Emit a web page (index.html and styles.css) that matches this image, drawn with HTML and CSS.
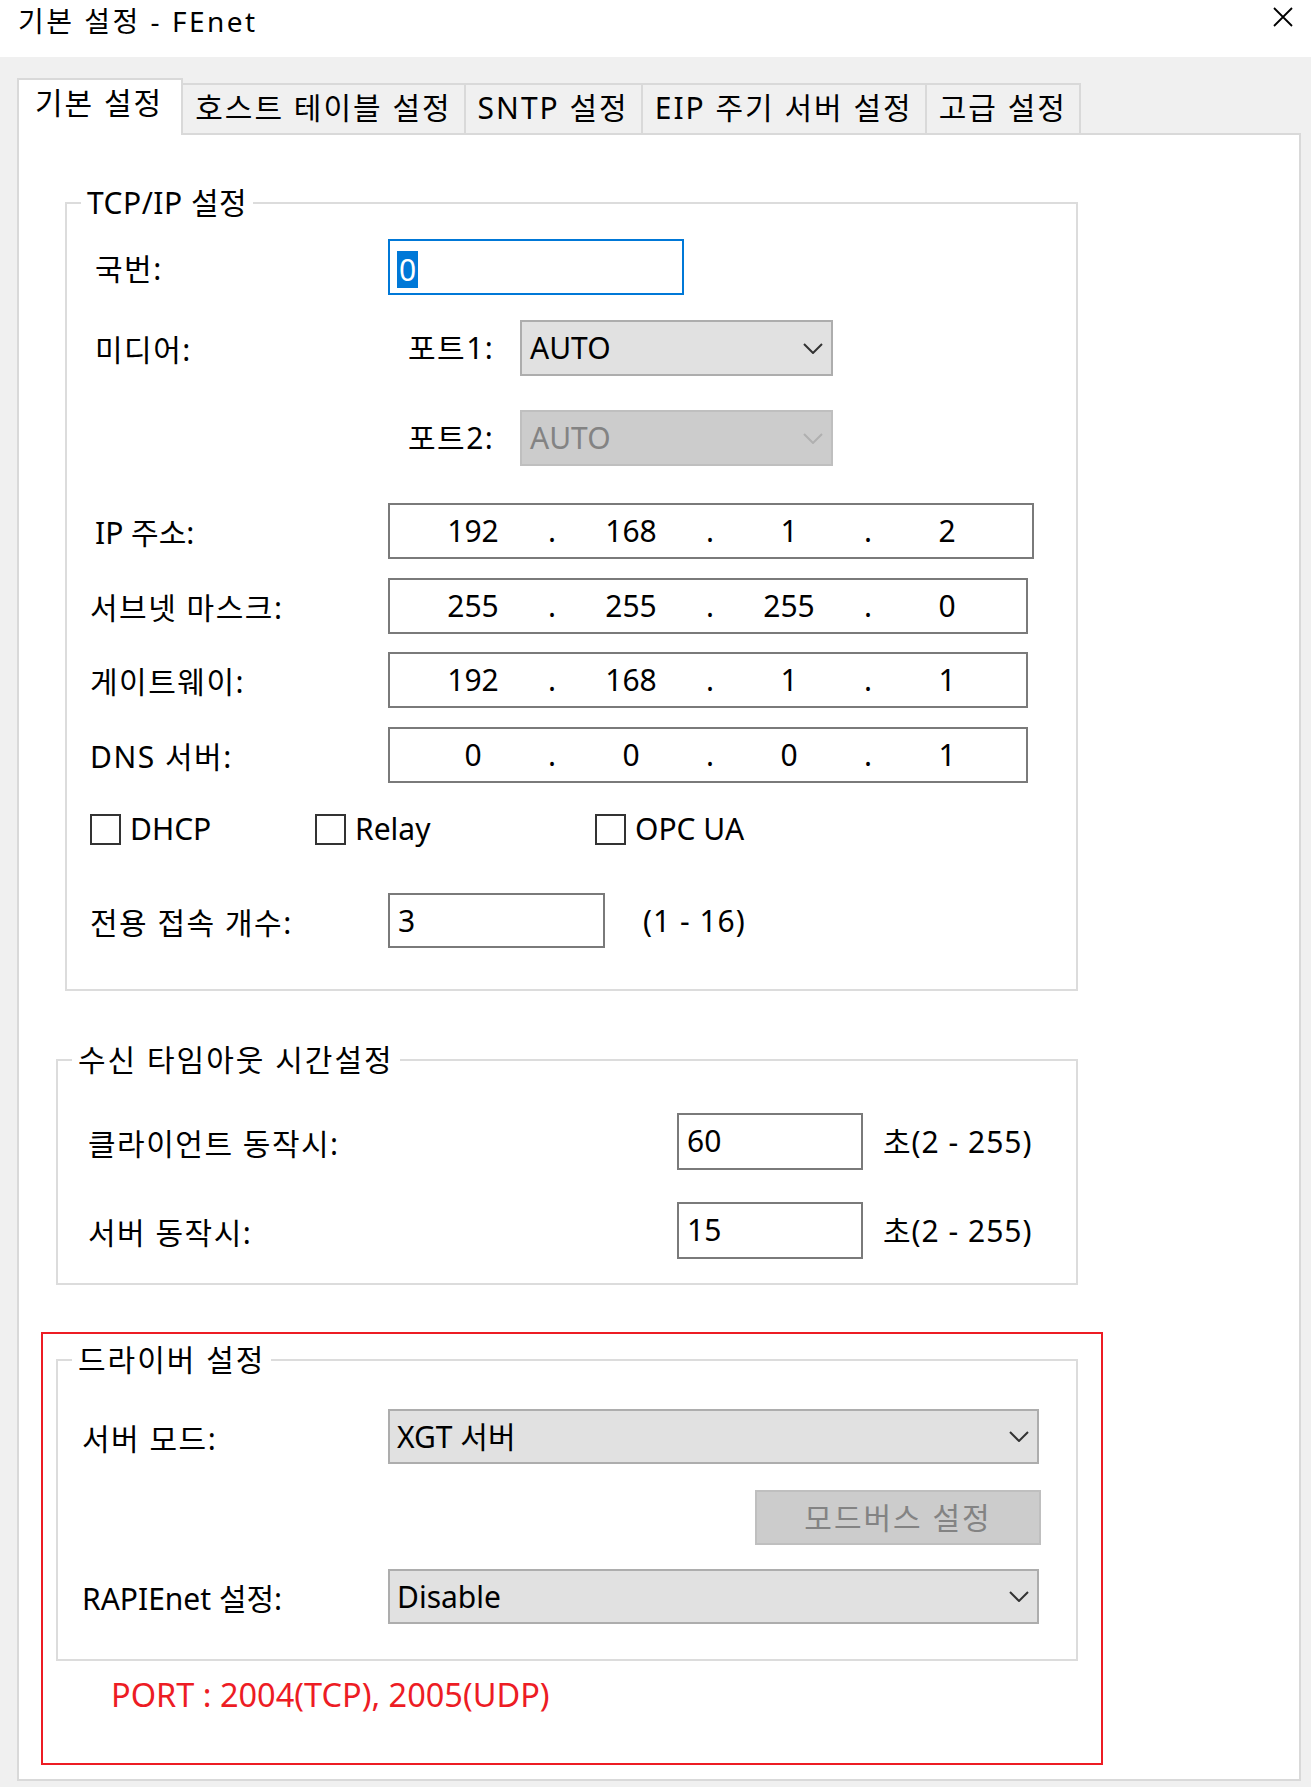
FILE: index.html
```html
<!DOCTYPE html>
<html lang="ko">
<head>
    <meta charset="UTF-8">
    <meta name="viewport" content="width=device-width, initial-scale=1.0">
    <title>기본 설정 - FEnet</title>
    <link rel="stylesheet" href="styles.css">
</head>
<body>
    <div class="titlebar">
        <span class="title">기본 설정 - FEnet</span>
        <svg class="close-icon" width="20" height="20" viewBox="0 0 20 20">
            <path d="M1 1 L19 19 M19 1 L1 19" stroke="#000" stroke-width="1.8" fill="none"/>
        </svg>
    </div>

    <div class="tabs">
        <div class="tab active">기본 설정</div>
        <div class="tab">호스트 테이블 설정</div>
        <div class="tab">SNTP 설정</div>
        <div class="tab">EIP 주기 서버 설정</div>
        <div class="tab">고급 설정</div>
    </div>

    <div class="panel">
        <!-- TCP/IP -->
        <div class="group group-tcp">
            <div class="group-title">TCP/IP 설정</div>
            <div class="group-body">
                <div class="row row-station">
                    <div class="label shift">국번:</div>
                    <div class="input focus station-input"><span class="selected">0</span></div>
                </div>
                <div class="row row-port1">
                    <div class="label shift">미디어:</div>
                    <div class="sublabel">포트1:</div>
                    <div class="select port-select">
                        <span>AUTO</span>
                        <svg width="20" height="11" viewBox="0 0 20 11"><polyline points="1,1 10,10 19,1" fill="none" stroke="#333" stroke-width="2"/></svg>
                    </div>
                </div>
                <div class="row row-port2">
                    <div class="label"></div>
                    <div class="sublabel">포트2:</div>
                    <div class="select disabled port-select">
                        <span>AUTO</span>
                        <svg width="20" height="11" viewBox="0 0 20 11"><polyline points="1,1 10,10 19,1" fill="none" stroke="#b0b0b0" stroke-width="2"/></svg>
                    </div>
                </div>
                <div class="row row-ip">
                    <div class="label shift tight">IP 주소:</div>
                    <div class="ip wide">
                        <span class="ip-seg">192</span><span class="ip-dot">.</span>
                        <span class="ip-seg">168</span><span class="ip-dot">.</span>
                        <span class="ip-seg">1</span><span class="ip-dot">.</span>
                        <span class="ip-seg">2</span>
                    </div>
                </div>
                <div class="row row-mask">
                    <div class="label">서브넷 마스크:</div>
                    <div class="ip">
                        <span class="ip-seg">255</span><span class="ip-dot">.</span>
                        <span class="ip-seg">255</span><span class="ip-dot">.</span>
                        <span class="ip-seg">255</span><span class="ip-dot">.</span>
                        <span class="ip-seg">0</span>
                    </div>
                </div>
                <div class="row row-gateway">
                    <div class="label">게이트웨이:</div>
                    <div class="ip">
                        <span class="ip-seg">192</span><span class="ip-dot">.</span>
                        <span class="ip-seg">168</span><span class="ip-dot">.</span>
                        <span class="ip-seg">1</span><span class="ip-dot">.</span>
                        <span class="ip-seg">1</span>
                    </div>
                </div>
                <div class="row row-dns">
                    <div class="label">DNS 서버:</div>
                    <div class="ip">
                        <span class="ip-seg">0</span><span class="ip-dot">.</span>
                        <span class="ip-seg">0</span><span class="ip-dot">.</span>
                        <span class="ip-seg">0</span><span class="ip-dot">.</span>
                        <span class="ip-seg">1</span>
                    </div>
                </div>
                <div class="checks">
                    <div class="check"><span class="box"></span>DHCP</div>
                    <div class="check"><span class="box"></span>Relay</div>
                    <div class="check"><span class="box"></span>OPC UA</div>
                </div>
                <div class="row row-sessions">
                    <div class="label">전용 접속 개수:</div>
                    <div class="input sessions-input">3</div>
                    <div class="hint range">(1 - 16)</div>
                </div>
            </div>
        </div>

        <!-- receive timeout -->
        <div class="group group-timeout">
            <div class="group-title">수신 타임아웃 시간설정</div>
            <div class="group-body">
                <div class="row row-client">
                    <div class="label">클라이언트 동작시:</div>
                    <div class="input timeout-input">60</div>
                    <div class="hint">초(2 - 255)</div>
                </div>
                <div class="row row-server">
                    <div class="label">서버 동작시:</div>
                    <div class="input timeout-input">15</div>
                    <div class="hint">초(2 - 255)</div>
                </div>
            </div>
        </div>

        <!-- driver (marked) -->
        <div class="notice">
            <div class="group group-driver">
                <div class="group-title">드라이버 설정</div>
                <div class="group-body">
                    <div class="row row-mode">
                        <div class="label">서버 모드:</div>
                        <div class="select driver-select">
                            <span>XGT 서버</span>
                            <svg width="20" height="11" viewBox="0 0 20 11"><polyline points="1,1 10,10 19,1" fill="none" stroke="#333" stroke-width="2"/></svg>
                        </div>
                    </div>
                    <div class="row row-modbus">
                        <div class="button disabled">모드버스 설정</div>
                    </div>
                    <div class="row row-rapi">
                        <div class="label tight">RAPIEnet 설정:</div>
                        <div class="select driver-select">
                            <span>Disable</span>
                            <svg width="20" height="11" viewBox="0 0 20 11"><polyline points="1,1 10,10 19,1" fill="none" stroke="#333" stroke-width="2"/></svg>
                        </div>
                    </div>
                </div>
            </div>
            <p class="port-note">PORT : 2004(TCP), 2005(UDP)</p>
        </div>
    </div>
</body>
</html>
```

FILE: styles.css
```css
* {
    margin: 0;
    padding: 0;
    box-sizing: border-box;
}

body {
    font-family: "Noto Sans", "Noto Sans CJK KR", sans-serif;
    font-size: 30px;
    color: #000;
    background-color: #f0f0f0;
    width: 1311px;
}

/* title bar */
.titlebar {
    height: 57px;
    background: #fff;
    display: flex;
    justify-content: space-between;
    padding: 0 18px;
}

.title {
    font-size: 28px;
    line-height: 40px;
    margin-top: 1px;
    letter-spacing: 2.5px;
}

.close-icon {
    margin-top: 7px;
}

/* tabs */
.tabs {
    display: flex;
    align-items: flex-end;
    height: 55px;
    margin: 21px 0 0 17px;
}

.tab {
    height: 50px;
    padding: 5px 12px 0;
    line-height: 36px;
    letter-spacing: 2px;
    white-space: nowrap;
    background: #f0f0f0;
    border: 2px solid #d9d9d9;
    border-left: none;
    border-bottom: none;
}

.tab.active {
    position: relative;
    z-index: 1;
    height: 57px;
    margin-bottom: -2px;
    padding: 5px 18px 0 16px;
    background: #fff;
    border-left: 2px solid #d9d9d9;
}

.panel {
    width: 1284px;
    margin-left: 17px;
    padding-bottom: 14px;
    background: #fff;
    border: 2px solid #d9d9d9;
}

/* group boxes */
.group {
    border: 2px solid #dcdcdc;
}

.group-title {
    display: table;
    margin: -19px 0 0 14px;
    padding: 0 6px;
    line-height: 36px;
    letter-spacing: 2px;
    background: #fff;
}

.group-tcp {
    width: 1013px;
    margin: 67px 0 0 46px;
    padding-bottom: 41px;
}

.group-tcp .group-title {
    letter-spacing: 0.5px;
}

.group-tcp .group-body {
    padding-left: 23px;
}

.group-timeout {
    width: 1022px;
    margin: 68px 0 0 37px;
    padding-bottom: 24px;
}

.group-timeout .group-body {
    padding-left: 30px;
}

.group-driver {
    width: 1022px;
    margin: 25px 0 0 13px;
    padding-bottom: 35px;
}

.group-driver .group-body {
    padding-left: 24px;
}

/* rows */
.row {
    display: flex;
    align-items: center;
    line-height: 36px;
}

.label {
    flex: none;
    white-space: nowrap;
    padding-top: 4px;
    letter-spacing: 1.5px;
}

.label.tight {
    letter-spacing: 0;
}

.group-tcp .label { width: 298px; }
.group-timeout .label { width: 589px; }
.group-driver .label { width: 306px; }

.label.shift {
    padding-left: 5px;
}

.sublabel {
    width: 112px;
    margin-left: 20px;
    letter-spacing: 1.5px;
}

.row-station { margin-top: 18px; }
.row-port1 { margin-top: 25px; }
.row-port2 { margin-top: 34px; }
.row-ip { margin-top: 37px; }
.row-mask { margin-top: 19px; }
.row-gateway { margin-top: 18px; }
.row-dns { margin-top: 19px; }
.row-sessions { margin-top: 48px; }
.row-client { margin-top: 35px; }
.row-server { margin-top: 32px; }
.row-mode { margin-top: 31px; }
.row-modbus { margin-top: 26px; justify-content: flex-end; padding-right: 35px; }
.row-rapi { margin-top: 24px; }

/* controls */
.input {
    height: 56px;
    padding-left: 8px;
    line-height: 52px;
    background: #fff;
    border: 2px solid #7a7a7a;
}

.input.focus {
    padding-left: 7px;
    border-color: #0078d7;
}

.input .selected {
    display: inline-block;
    padding: 0 2px;
    line-height: 37px;
    vertical-align: middle;
    color: #fff;
    background: #0078d7;
}

.station-input { width: 296px; }
.sessions-input { width: 217px; height: 55px; }
.timeout-input { width: 186px; height: 57px; }

.select {
    display: flex;
    align-items: center;
    justify-content: space-between;
    height: 56px;
    padding: 0 8px 0 8px;
    background: #e1e1e1;
    border: 2px solid #adadad;
}

.select.disabled {
    color: #838383;
    background: #ccc;
    border-color: #bfbfbf;
}

.port-select { width: 313px; }
.driver-select { width: 651px; height: 55px; padding-left: 7px; }

.button {
    width: 286px;
    height: 55px;
    line-height: 51px;
    text-align: center;
    letter-spacing: 2px;
    background: #e1e1e1;
    border: 2px solid #adadad;
}

.button.disabled {
    color: #838383;
    background: #ccc;
    border-color: #bfbfbf;
}

.ip {
    display: flex;
    align-items: center;
    width: 640px;
    height: 56px;
    padding-left: 9px;
    border: 2px solid #7a7a7a;
}

.ip.wide { width: 646px; }

.ip-seg {
    width: 148px;
    text-align: center;
}

.ip-dot {
    width: 10px;
    text-align: center;
}

.hint {
    margin-left: 20px;
    white-space: nowrap;
    letter-spacing: 1px;
}

.hint.range {
    margin-left: 38px;
}

/* checkboxes */
.checks {
    display: grid;
    grid-template-columns: 225px 280px auto;
    margin-top: 30px;
    height: 32px;
    line-height: 32px;
}

.check {
    display: flex;
    align-items: center;
    gap: 9px;
}

.box {
    width: 31px;
    height: 31px;
    background: #fff;
    border: 2px solid #333;
}

/* red marker around driver settings */
.notice {
    width: 1062px;
    margin: 47px 0 0 22px;
    padding-bottom: 48px;
    border: 2px solid #ed1c24;
}

.port-note {
    margin-top: 14px;
    padding-left: 68px;
    font-size: 32.5px;
    line-height: 40px;
    color: #ed1c24;
}
```
